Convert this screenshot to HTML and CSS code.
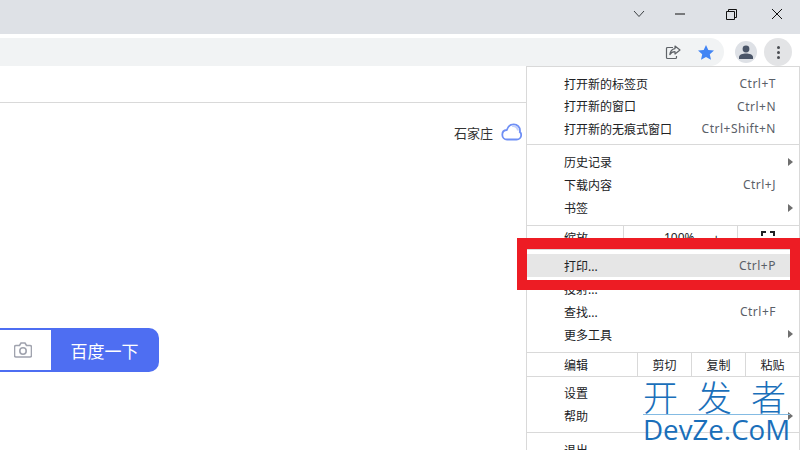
FILE: index.html
```html
<!DOCTYPE html>
<html lang="zh-CN">
<head>
<meta charset="utf-8">
<title>百度一下</title>
<link rel="stylesheet" href="styles.css">
</head>
<body>
<header class="titlebar">
  <span class="win-btn"><svg width="12" height="8" viewBox="0 0 12 8"><path d="M1 1l5 5.500L11 1" fill="none" stroke="#3c4043" stroke-width="1"/></svg></span>
  <span class="win-btn win-min"><svg width="12" height="2" viewBox="0 0 12 2"><path d="M1 1h10" fill="none" stroke="#111" stroke-width="1"/></svg></span>
  <span class="win-btn"><svg width="11" height="11" viewBox="0 0 11 11"><path d="M.5 2.500h8v8h-8zM2.500 2.500v-2h8v8h-2" fill="none" stroke="#111" stroke-width="1"/></svg></span>
  <span class="win-btn"><svg width="12" height="12" viewBox="0 0 12 12"><path d="M1 1l10 10M11 1L1 11" fill="none" stroke="#111" stroke-width="1"/></svg></span>
</header>
<nav class="toolbar">
  <div class="omnibox">
    <svg class="share" width="16" height="15" viewBox="0 0 16 15"><path d="M8 2.500H2.500a1 1 0 0 0-1 1v9a1 1 0 0 0 1 1h8a1 1 0 0 0 1-1V11" fill="none" stroke="#5f6368" stroke-width="1.200"/><path d="M10 1l5 4-5 4V6.600C7.500 6.600 6 7.500 4.800 9.600 5.200 6.400 7 4 10 3.600z" fill="none" stroke="#5f6368" stroke-width="1.200" stroke-linejoin="round"/></svg>
    <svg class="star" width="16" height="15" viewBox="0 0 16 15"><path d="M8 0l2.300 5 5.700.6-4.200 3.700 1.200 5.500L8 12l-5 2.800 1.200-5.500L0 5.600 5.700 5z" fill="#4285f4"/></svg>
  </div>
  <span class="avatar"><svg width="14" height="14" viewBox="0 0 14 14"><circle cx="7" cy="4" r="3.400" fill="#4a5568"/><path d="M0 14v-2c0-2.500 4-3.500 7-3.500s7 1 7 3.500v2z" fill="#4a5568"/></svg></span>
  <span class="kebab"><i></i><i></i><i></i></span>
</nav>
<main class="page">
  <div class="page-head"></div>
  <div class="weather">
    <span>石家庄</span>
    <svg width="21" height="18" viewBox="0 0 21 18"><path d="M6 16.500a4.800 4.800 0 0 1-4.700-4.800c0-2.600 2-4.500 4.500-4.700C6.800 3.700 9.500 1.300 12.800 1.300c3.500 0 6.200 2.700 6.200 6.100 0 .7-.1 1.200-.2 1.600 1 .7 1.400 1.700 1.400 2.900 0 2.600-2 4.600-4.600 4.600z" fill="#fff" stroke="#6f8ff5" stroke-width="1.800"/><path d="M11 3a5 5 0 0 1 6 4.500" fill="none" stroke="#c3d1fb" stroke-width="2"/></svg>
  </div>
  <div class="search">
    <div class="search-input"><svg width="18" height="16" viewBox="0 0 18 16"><path d="M2 3.500h3.500L7 1h4l1.500 2.500H16a1.500 1.500 0 0 1 1.500 1.500v8.500A1.500 1.500 0 0 1 16 15H2A1.500 1.500 0 0 1 .5 13.500V5A1.500 1.500 0 0 1 2 3.500z" fill="none" stroke="#a0a3ae" stroke-width="1.600"/><circle cx="9" cy="9" r="3.200" fill="none" stroke="#a0a3ae" stroke-width="1.600"/></svg></div>
    <div class="search-btn">百度一下</div>
  </div>
</main>
<aside class="menu">
  <section class="group group-first">
    <div class="row row-tight"><span>打开新的标签页</span><kbd>Ctrl+T</kbd></div>
    <div class="row row-tight"><span>打开新的窗口</span><kbd>Ctrl+N</kbd></div>
    <div class="row row-tight"><span>打开新的无痕式窗口</span><kbd>Ctrl+Shift+N</kbd></div>
  </section>
  <section class="group group-history">
    <div class="row"><span>历史记录</span><b class="arrow"></b></div>
    <div class="row"><span>下载内容</span><kbd>Ctrl+J</kbd></div>
    <div class="row"><span>书签</span><b class="arrow"></b></div>
  </section>
  <section class="cells">
    <span class="cell-label">缩放</span>
    <span class="cell cell-zoom"><em>100%</em><em class="plus">+</em></span>
    <span class="cell cell-full"><svg width="14" height="14" viewBox="0 0 14 14"><path d="M1 5V1h4M9 1h4v4M13 9v4H9M5 13H1V9" fill="none" stroke="#202124" stroke-width="2"/></svg></span>
  </section>
  <section class="group group-print">
    <div class="row row-active"><span>打印...</span><kbd>Ctrl+P</kbd></div>
    <div class="row"><span>投射...</span></div>
    <div class="row"><span>查找...</span><kbd>Ctrl+F</kbd></div>
    <div class="row"><span>更多工具</span><b class="arrow"></b></div>
  </section>
  <section class="cells cells-edit">
    <span class="cell-label">编辑</span>
    <span class="cell">剪切</span>
    <span class="cell">复制</span>
    <span class="cell">粘贴</span>
  </section>
  <section class="group group-settings">
    <div class="row"><span>设置</span></div>
    <div class="row"><span>帮助</span><b class="arrow"></b></div>
  </section>
  <section class="group group-exit">
    <div class="row"><span>退出</span></div>
  </section>
</aside>
<div class="highlight"></div>
<div class="watermark">
  <div class="wm-cn">开发者</div>
  <div class="wm-en">DevZe.CoM</div>
</div>
</body>
</html>
```

FILE: styles.css
```css
* { box-sizing: border-box; }
html, body { margin: 0; height: 450px; overflow: hidden; }
body {
  position: relative;
  width: 800px;
  background: #fff;
  color: #202124;
  font-family: "Noto Sans", "Noto Sans CJK SC", sans-serif;
  font-size: 12px;
}
.titlebar {
  height: 34px;
  background: #dee1e6;
  display: flex;
  justify-content: flex-end;
  align-items: center;
  padding-bottom: 6px;
}
.win-btn { width: 46px; display: flex; justify-content: center; align-items: center; }
.win-min { padding-right: 10px; }
.toolbar {
  height: 32px;
  background: #fff;
  display: flex;
  align-items: flex-end;
}
.omnibox {
  width: 724px;
  height: 28px;
  background: #f1f3f4;
  border-radius: 0 14px 14px 0;
  display: flex;
  align-items: center;
  justify-content: flex-end;
  gap: 17px;
  padding-right: 10px;
}
.avatar {
  margin-left: 11px;
  width: 22px;
  height: 22px;
  margin-bottom: 3px;
  border-radius: 50%;
  background: #dee1e6;
  display: flex;
  align-items: center;
  justify-content: center;
}
.kebab {
  margin-left: 7px;
  width: 28px;
  height: 28px;
  border-radius: 50%;
  background: #e3e4e6;
  display: flex;
  flex-direction: column;
  align-items: center;
  justify-content: center;
  gap: 2px;
}
.kebab i { width: 3px; height: 3px; border-radius: 50%; background: #4a4d52; }
.page-head { height: 37px; border-bottom: 1px solid #d9d9d9; }
.weather {
  display: flex;
  align-items: center;
  justify-content: flex-end;
  gap: 8px;
  padding-right: 278px;
  margin-top: 19px;
  height: 20px;
  font-size: 13px;
  color: #333;
}
.search { display: flex; width: 159px; height: 44px; margin-top: 186px; }
.search-input {
  width: 51px;
  background: #fff;
  border: 2px solid #4e6ef2;
  border-width: 2px 0;
  display: flex;
  align-items: center;
  justify-content: center;
  padding-right: 5px;
}
.search-btn {
  flex: 1;
  background: #4e6ef2;
  border-radius: 0 10px 10px 0;
  color: #fff;
  font-size: 17px;
  display: flex;
  align-items: center;
  justify-content: center;
  padding-right: 1px;
}
.menu {
  position: absolute;
  left: 526px;
  top: 66px;
  width: 274px;
  height: 400px;
  background: #fff;
  border: 1px solid #d9d9d9;
  padding-top: 5px;
}
.group { border-bottom: 1px solid #d9d9d9; }
.group-first { padding-bottom: 4.5px; }
.group-history { padding: 6px 0 5px; }
.group-print { padding: 4px 0 6px; }
.group-settings { padding: 5px 0 4px; }
.group-exit { padding-top: 6px; border-bottom: 0; }
.row {
  height: 23px;
  padding: 0 23px 2px 37px;
  position: relative;
  display: flex;
  align-items: center;
  justify-content: space-between;
}
.row-tight { height: 22.5px; padding-top: 2px; padding-bottom: 1px; }
.group-print .row { padding-bottom: 0; }
.row-active { background: #e6e6e6; }
kbd { font: inherit; color: #5a6068; letter-spacing: .5px; }
.arrow {
  position: absolute;
  right: 6px;
  top: 7px;
  border-left: 5px solid #6f6f6f;
  border-top: 4px solid transparent;
  border-bottom: 4px solid transparent;
}
.cells {
  height: 24px;
  display: flex;
  align-items: center;
  border-bottom: 1px solid #d9d9d9;
}
.cell-label { flex: 1; padding-left: 37px; }
.cell {
  height: 100%;
  width: 54px;
  border-left: 1px solid #d9d9d9;
  display: flex;
  align-items: center;
  justify-content: center;
}
.cell-zoom { width: 114px; justify-content: flex-start; gap: 18px; padding-left: 40px; }
.cell-zoom em { font-style: normal; }
.plus { font-size: 13px; }
.cell-full { width: 62px; padding-right: 1px; }
.highlight {
  position: absolute;
  left: 517px;
  top: 238px;
  width: 283px;
  height: 52px;
  border: solid #ed1c24;
  border-width: 11px 10px 10px;
}
.watermark {
  position: absolute;
  left: 643px;
  top: 380px;
  width: 147px;
  color: #1a6fba;
}
.wm-cn {
  height: 35px;
  font-size: 35px;
  line-height: 35px;
  letter-spacing: 19px;
  white-space: nowrap;
  font-weight: 300;
  border-bottom: 1px solid #84bbe3;
}
.wm-en {
  font-family: "Open Sans", sans-serif;
  font-size: 27.7px;
  line-height: 28px;
  white-space: nowrap;
}
```
